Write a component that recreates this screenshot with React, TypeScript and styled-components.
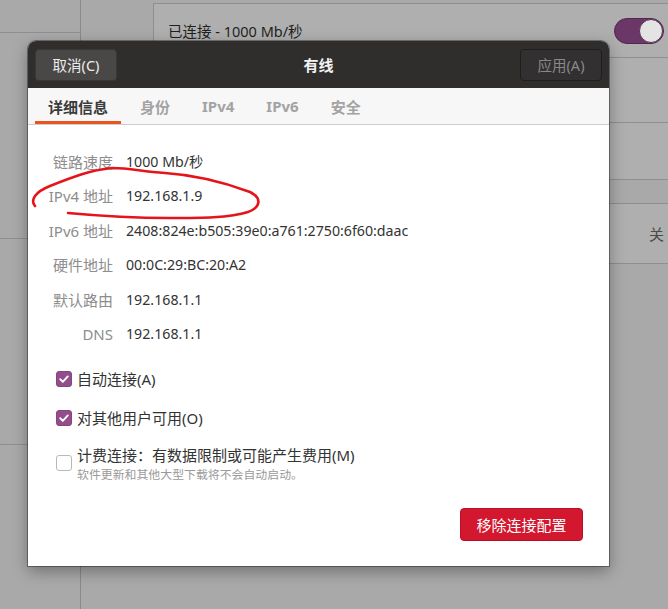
import { FC } from 'react';
import styled, { createGlobalStyle } from 'styled-components';

const FONT = `"Noto Sans", "Noto Sans CJK SC", sans-serif`;

const GlobalStyle = createGlobalStyle`
  html, body {
    margin: 0;
    padding: 0;
  }

  body {
    font-family: ${FONT};
    background: #a9a9a9;
  }
`;

const INFO_ROWS: [string, string][] = [
  ['链路速度', '1000 Mb/秒'],
  ['IPv4 地址', '192.168.1.9'],
  ['IPv6 地址', '2408:824e:b505:39e0:a761:2750:6f60:daac'],
  ['硬件地址', '00:0C:29:BC:20:A2'],
  ['默认路由', '192.168.1.1'],
  ['DNS', '192.168.1.1'],
];

const TABS = ['详细信息', '身份', 'IPv4', 'IPv6', '安全'];

const CheckMark: FC = () => (
  <svg width="12" height="12" viewBox="0 0 12 12">
    <polyline
      points="2.2,6.2 4.8,8.8 9.8,3.4"
      fill="none"
      stroke="#fff"
      strokeWidth="1.9"
      strokeLinecap="round"
      strokeLinejoin="round"
    />
  </svg>
);

const App: FC = () => {
  return (
    <>
      <GlobalStyle />
      <Screen>
        {/* desktop behind the dialog */}
        <Sidebar>
          <SideRow height={32} />
          <SideRow height={205} />
          <SideRow height={205} />
          <SideRow height={0} grow />
        </Sidebar>
        <Middle />
        <Panel>
          <Card>
            <CardRow height={54}>
              <RowText>已连接 - 1000 Mb/秒</RowText>
              <Toggle>
                <Knob />
              </Toggle>
            </CardRow>
            <CardRow height={65} />
            <CardRow height={56} last />
          </Card>
          <Card>
            <CardRow height={59} last>
              <span />
              <RowValue>关</RowValue>
            </CardRow>
          </Card>
        </Panel>

        <Dialog>
          <Header>
            <HeaderButton>取消(C)</HeaderButton>
            <Title>有线</Title>
            <HeaderButton disabled>应用(A)</HeaderButton>
          </Header>

          <TabBar>
            {TABS.map((tab, i) => (
              <Tab key={tab} active={i === 0}>
                {tab}
              </Tab>
            ))}
          </TabBar>

          <Body>
            <InfoGrid>
              {INFO_ROWS.map(([label, value]) => (
                <InfoRow key={label}>
                  <Label>{label}</Label>
                  <Value>{value}</Value>
                </InfoRow>
              ))}
            </InfoGrid>

            <CheckList>
              <CheckRow>
                <Box checked>
                  <CheckMark />
                </Box>
                <CheckLabel>自动连接(A)</CheckLabel>
              </CheckRow>
              <CheckRow>
                <Box checked>
                  <CheckMark />
                </Box>
                <CheckLabel>对其他用户可用(O)</CheckLabel>
              </CheckRow>
              <CheckRow top>
                <Box />
                <div>
                  <CheckLabel>计费连接：有数据限制或可能产生费用(M)</CheckLabel>
                  <Hint>软件更新和其他大型下载将不会自动启动。</Hint>
                </div>
              </CheckRow>
            </CheckList>

            <Footer>
              <DangerButton>移除连接配置</DangerButton>
            </Footer>
          </Body>
        </Dialog>

        {/* hand-drawn red mark around the IPv4 row */}
        <Annotation viewBox="0 0 668 609">
          <path
            d="M35 206 C30 200, 35 192, 50 186 C70 178, 90 170, 112 168 C132 168, 142 172, 165 173 C196 175, 226 183, 250 192 C262 198, 261 207, 248 212 C230 218, 200 218, 170 218 C130 218, 100 216, 68 213"
            fill="none"
            stroke="#e5141b"
            strokeWidth="2.6"
            strokeLinecap="round"
          />
        </Annotation>
      </Screen>
    </>
  );
};

export default App;

const Screen = styled.div`
  position: relative;
  display: flex;
  width: 668px;
  height: 609px;
  overflow: hidden;
  background: #a9a9a9;
`;

const Sidebar = styled.div`
  display: flex;
  flex-direction: column;
  width: 80px;
  border-right: 1px solid #8a8a8a;
`;

const SideRow = styled.div<{ height: number; grow?: boolean }>`
  flex: ${({ grow }) => (grow ? '1' : '0 0 auto')};
  height: ${({ height }) => height}px;
  border-bottom: ${({ grow }) => (grow ? 'none' : '1px solid #8f8f8f')};
`;

const Middle = styled.div`
  width: 72px;
`;

const Panel = styled.div`
  flex: 1;
  display: flex;
  flex-direction: column;
  gap: 23px;
  padding-top: 3px;
`;

const Card = styled.div`
  background: #afafaf;
  border: 1px solid #8f8f8f;
  border-right: none;
`;

const CardRow = styled.div<{ height: number; last?: boolean }>`
  display: flex;
  align-items: center;
  justify-content: space-between;
  height: ${({ height }) => height}px;
  padding: 0 4px 0 14px;
  box-sizing: border-box;
  border-bottom: ${({ last }) => (last ? 'none' : '1px solid #8f8f8f')};
`;

const RowText = styled.span`
  font-size: 14.5px;
  color: #1f1f1f;
`;

const RowValue = styled.span`
  font-size: 15px;
  color: #4a4a4a;
`;

const Toggle = styled.div`
  display: flex;
  justify-content: flex-end;
  align-items: center;
  width: 50px;
  height: 26px;
  box-sizing: border-box;
  border-radius: 13px;
  background: #6b3766;
  border: 1px solid #52284e;
`;

const Knob = styled.div`
  width: 24px;
  height: 24px;
  border-radius: 50%;
  background: #e4e4e4;
  border: 1px solid #5a3157;
  box-sizing: border-box;
`;

const Dialog = styled.div`
  position: absolute;
  left: 28px;
  top: 41px;
  z-index: 1;
  display: flex;
  flex-direction: column;
  width: 581px;
  height: 525px;
  background: #ffffff;
  border-radius: 8px 8px 0 0;
  overflow: hidden;
  box-shadow: 0 0 0 1px rgba(0, 0, 0, 0.35), 0 5px 16px rgba(0, 0, 0, 0.35);
`;

const Header = styled.div`
  display: grid;
  grid-template-columns: 82px 1fr 82px;
  align-items: center;
  height: 47px;
  padding: 0 7px;
  background: #302e2d;
`;

const HeaderButton = styled.div<{ disabled?: boolean }>`
  display: flex;
  align-items: center;
  justify-content: center;
  height: 32px;
  border-radius: 4px;
  font-size: 14.5px;
  box-sizing: border-box;
  color: ${({ disabled }) => (disabled ? '#8b8987' : '#ececec')};
  background: ${({ disabled }) => (disabled ? '#323030' : '#4a4846')};
  border: 1px solid ${({ disabled }) => (disabled ? '#1f1e1e' : '#3a3837')};
`;

const Title = styled.div`
  text-align: center;
  font-size: 15px;
  font-weight: 700;
  color: #f2f2f2;
`;

const TabBar = styled.div`
  display: flex;
  height: 37px;
  box-sizing: border-box;
  padding-left: 4px;
  background: #f7f7f7;
  border-bottom: 1px solid #cdcdcd;
`;

const Tab = styled.div<{ active?: boolean }>`
  position: relative;
  display: flex;
  align-items: center;
  padding: 0 16px;
  font-size: 15px;
  font-weight: 700;
  color: ${({ active }) => (active ? '#3b3b3b' : '#a3a3a3')};

  &::after {
    content: '';
    display: ${({ active }) => (active ? 'block' : 'none')};
    position: absolute;
    left: 3px;
    right: 3px;
    bottom: 0;
    height: 3px;
    background: #e95420;
  }
`;

const Body = styled.div`
  flex: 1;
  display: flex;
  flex-direction: column;
  padding-top: 19px;
`;

const InfoGrid = styled.div`
  display: grid;
  grid-auto-rows: 34.5px;
`;

const InfoRow = styled.div`
  display: grid;
  grid-template-columns: 85px 1fr;
  column-gap: 13px;
  align-items: center;
`;

const Label = styled.span`
  text-align: right;
  font-size: 15px;
  color: #8d8d8d;
`;

const Value = styled.span`
  font-size: 14.2px;
  color: #333333;
`;

const CheckList = styled.div`
  display: flex;
  flex-direction: column;
  gap: 15px;
  margin-top: 16px;
  padding-left: 28px;
`;

const CheckRow = styled.div<{ top?: boolean }>`
  display: flex;
  align-items: ${({ top }) => (top ? 'flex-start' : 'center')};
  gap: 5px;
  min-height: 24px;

  & > :first-child {
    margin-top: ${({ top }) => (top ? '10px' : '0')};
  }
`;

const Box = styled.div<{ checked?: boolean }>`
  display: flex;
  align-items: center;
  justify-content: center;
  flex: 0 0 auto;
  width: 16px;
  height: 16px;
  box-sizing: border-box;
  border-radius: 3px;
  background: ${({ checked }) => (checked ? '#924d8b' : '#ffffff')};
  border: 1px solid ${({ checked }) => (checked ? '#87457f' : '#b8b8b8')};
`;

const CheckLabel = styled.div`
  font-size: 15px;
  line-height: 20px;
  color: #333333;
`;

const Hint = styled.div`
  margin-top: 1px;
  font-size: 11.9px;
  line-height: 16px;
  color: #9a9a9a;
`;

const Footer = styled.div`
  display: flex;
  justify-content: flex-end;
  margin-top: auto;
  padding: 0 26px 25px 0;
`;

const DangerButton = styled.div`
  display: flex;
  align-items: center;
  justify-content: center;
  width: 123px;
  height: 33px;
  box-sizing: border-box;
  border-radius: 4px;
  background: #d3172f;
  border: 1px solid #b5122a;
  color: #ffffff;
  font-size: 15px;
`;

const Annotation = styled.svg`
  position: absolute;
  top: 0;
  left: 0;
  z-index: 2;
  width: 668px;
  height: 609px;
  pointer-events: none;
`;
